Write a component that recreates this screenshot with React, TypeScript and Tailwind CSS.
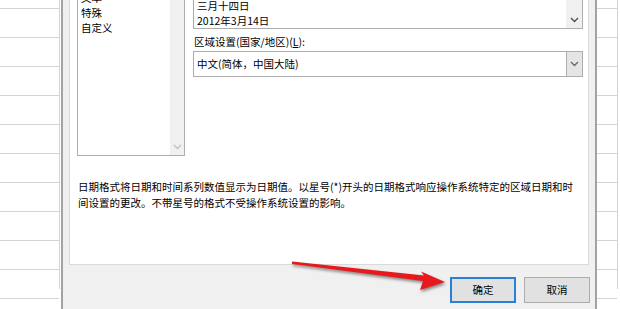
import React from "react";

const rows = Array.from({ length: 12 });

function Chevron({ className }: { className: string }) {
  return (
    <svg width="9" height="6" viewBox="0 0 9 6" className={className}>
      <path d="M1 1 L4.5 4.5 L8 1" fill="none" stroke="currentColor" strokeWidth="1.4" />
    </svg>
  );
}

export default function App() {
  return (
    <div className="relative w-[620px] h-[309px] overflow-hidden bg-white flex font-['Noto_Sans_CJK_SC',sans-serif] text-[10.5px] text-black">
      {/* left sheet */}
      <div className="w-[61px] h-full bg-white">
        <div className="w-[60px] h-full border-r border-[#d4d4d4] -mt-[20px]">
          {rows.map((_, i) => (
            <div key={i} className="h-[29px] border-b border-[#d4d4d4]" />
          ))}
        </div>
      </div>

      {/* dialog */}
      <div className="w-[536px] h-full border-x-2 border-[#a3a3a3] bg-[#f0f0f0] px-[6px] flex flex-col">
        <div className="h-[265px] bg-white border border-t-0 border-[#dadada] flex flex-col overflow-hidden">
          <div className="flex -mt-[12px] pl-[7px] gap-[8px]">
            {/* category list */}
            <div className="w-[108px] h-[168px] border border-[#adadad] bg-white flex">
              <div className="flex-1 pt-[1px] pl-[3px] leading-[15px]">
                <div>文本</div>
                <div>特殊</div>
                <div>自定义</div>
              </div>
              <div className="w-[14px] h-full bg-[#f0f0f0] flex flex-col justify-end items-center">
                <div className="h-[17px] flex items-center">
                  <Chevron className="text-[#c2c2c2]" />
                </div>
              </div>
            </div>

            {/* right column */}
            <div className="w-[390px] flex flex-col">
              <div className="h-[41px] border border-[#adadad] bg-white flex">
                <div className="flex-1 flex flex-col justify-end pl-[3px] leading-[15px]">
                  <div>三月十四日</div>
                  <div>2012年3月14日</div>
                </div>
                <div className="w-[16px] h-full bg-[#f0f0f0] flex flex-col justify-end items-center">
                  <div className="h-[17px] flex items-center">
                    <Chevron className="text-[#505050]" />
                  </div>
                </div>
              </div>
              <div className="mt-[5px] leading-[15px] pl-[1px]">
                区域设置(国家/地区)(<span className="underline">L</span>):
              </div>
              <div className="mt-[2px] h-[26px] border border-[#adadad] bg-white flex items-stretch">
                <div className="flex-1 flex items-center pl-[3px]">中文(简体，中国大陆)</div>
                <div className="w-[16px] bg-[#e5e5e5] border-l border-[#adadad] flex items-center justify-center">
                  <Chevron className="text-[#6a6a6a]" />
                </div>
              </div>
            </div>
          </div>

          <div className="mt-[23px] pl-[8px] leading-[16px]">
            <div>日期格式将日期和时间系列数值显示为日期值。以星号(*)开头的日期格式响应操作系统特定的区域日期和时</div>
            <div>间设置的更改。不带星号的格式不受操作系统设置的影响。</div>
          </div>
        </div>

        <div className="mt-[12px] flex justify-end gap-[8px] -mr-[1px]">
          <div className="w-[66px] h-[26px] bg-[#e1e1e1] border-2 border-[#2a7fd6] flex items-center justify-center">
            确定
          </div>
          <div className="w-[66px] h-[26px] bg-[#e1e1e1] border border-[#adadad] flex items-center justify-center">
            取消
          </div>
        </div>
      </div>

      {/* right sheet */}
      <div className="w-[23px] h-full bg-white">
        <div className="w-[21px] h-full border-r border-[#d4d4d4] -mt-[20px]">
          {rows.map((_, i) => (
            <div key={i} className="h-[29px] border-b border-[#d4d4d4]" />
          ))}
        </div>
      </div>

      {/* red arrow overlay */}
      <svg
        className="absolute left-0 top-0 pointer-events-none drop-shadow-[1px_2px_1.5px_rgba(0,0,0,0.45)]"
        width="620"
        height="309"
        viewBox="0 0 620 309"
      >
        <polygon
          points="292,261.5 424,275.5 421,271.5 445,282 420,290 423,281 292,264"
          fill="#e8191c"
        />
      </svg>
    </div>
  );
}
